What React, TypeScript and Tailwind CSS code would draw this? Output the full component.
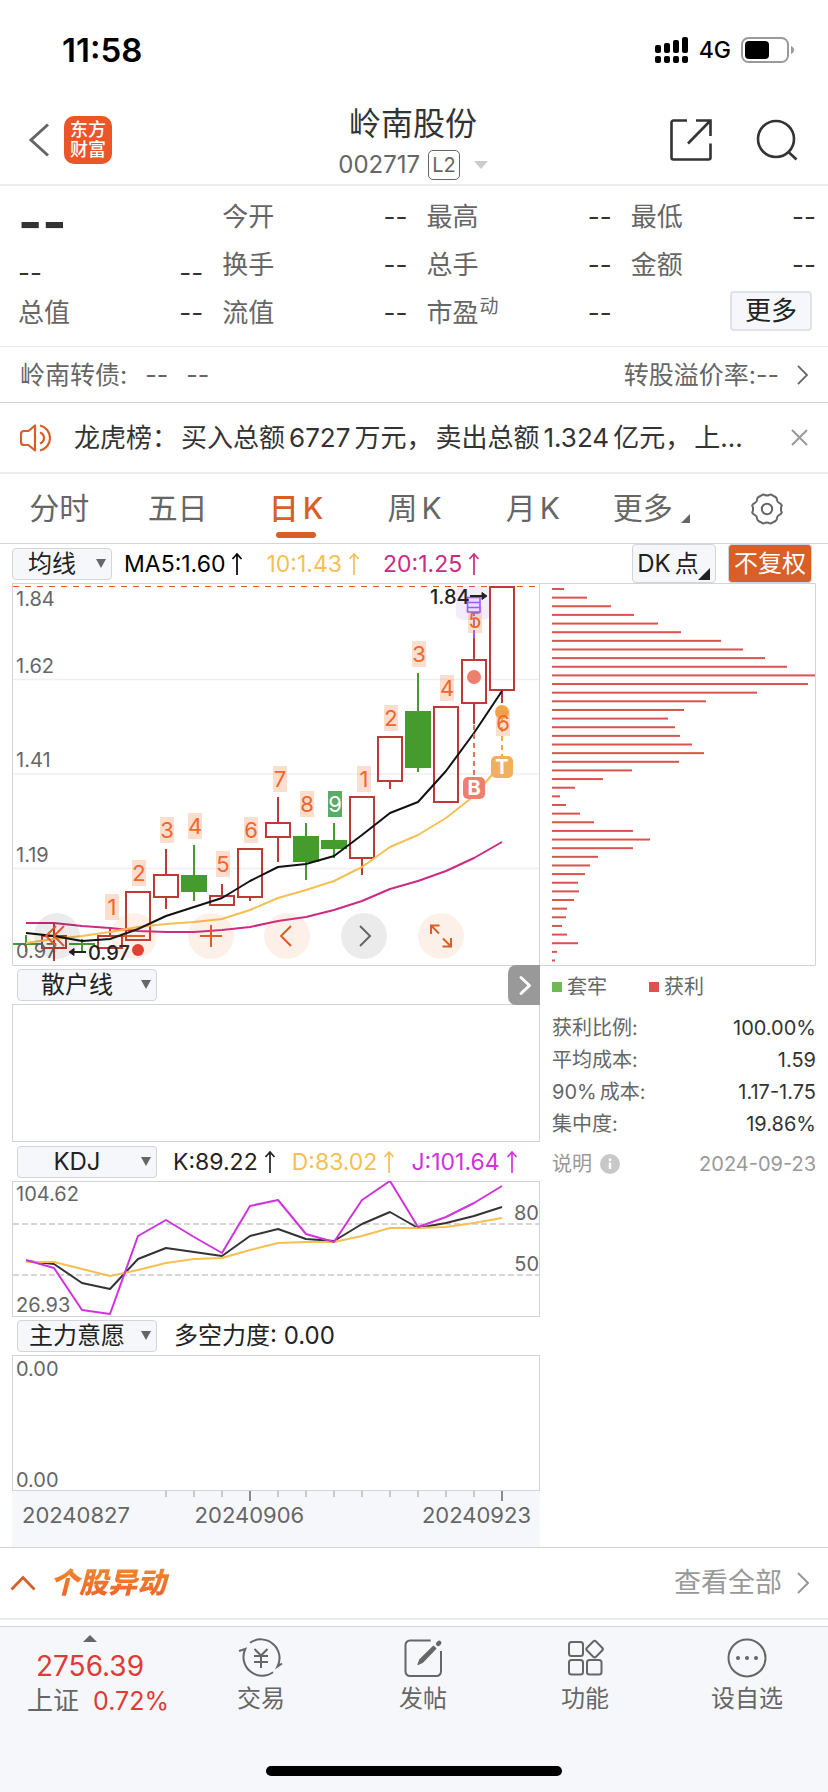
import React from "react";

const FONT = "font-['Inter','Noto_Sans_CJK_SC',sans-serif]";

const CANDLE_STEP = 28;
const FIRST_X = 26;
const xAt = (i: number) => FIRST_X + CANDLE_STEP * i;
const toPoints = (ys: number[]) => ys.map((y, i) => `${xAt(i)},${y}`).join(" ");

type Candle = { kind: "up" | "down" | "flat"; high: number; top: number; bottom: number; low: number };

const candles: Candle[] = [
  { kind: "flat", high: 935, top: 944, bottom: 944, low: 952 },
  { kind: "up", high: 923, top: 936, bottom: 948, low: 961 },
  { kind: "flat", high: 939, top: 944, bottom: 944, low: 952 },
  { kind: "up", high: 927, top: 936, bottom: 948, low: 948 },
  { kind: "up", high: 892, top: 892, bottom: 940, low: 940 },
  { kind: "up", high: 849, top: 875, bottom: 897, low: 909 },
  { kind: "down", high: 845, top: 875, bottom: 892, low: 901 },
  { kind: "up", high: 884, top: 896, bottom: 905, low: 905 },
  { kind: "up", high: 849, top: 849, bottom: 897, low: 901 },
  { kind: "up", high: 797, top: 823, bottom: 837, low: 862 },
  { kind: "down", high: 823, top: 836, bottom: 862, low: 880 },
  { kind: "down", high: 823, top: 840, bottom: 849, low: 858 },
  { kind: "up", high: 797, top: 797, bottom: 858, low: 875 },
  { kind: "up", high: 737, top: 737, bottom: 781, low: 789 },
  { kind: "down", high: 673, top: 711, bottom: 768, low: 772 },
  { kind: "up", high: 707, top: 707, bottom: 802, low: 802 },
  { kind: "up", high: 638, top: 660, bottom: 703, low: 724 },
  { kind: "up", high: 587, top: 587, bottom: 690, low: 703 },
];

const ma5 = [933, 936, 941, 939, 929, 916, 907, 898, 881, 867, 864, 856, 835, 813, 802, 771, 733, 691];
const ma10 = [943, 939, 936, 932, 927, 924, 922, 919, 910, 898, 890, 881, 867, 847, 835, 818, 796, 763];
const ma20 = [923, 923, 926, 928, 931, 932, 932, 930, 927, 921, 917, 910, 901, 889, 881, 871, 858, 842];

const tags: { x: number; y: number; n: number }[] = [
  { x: 112, y: 894, n: 1 },
  { x: 139, y: 860, n: 2 },
  { x: 167, y: 817, n: 3 },
  { x: 195, y: 813, n: 4 },
  { x: 223, y: 851, n: 5 },
  { x: 251, y: 817, n: 6 },
  { x: 280, y: 766, n: 7 },
  { x: 307, y: 791, n: 8 },
  { x: 335, y: 791, n: 9 },
  { x: 364, y: 766, n: 1 },
  { x: 391, y: 705, n: 2 },
  { x: 419, y: 641, n: 3 },
  { x: 447, y: 675, n: 4 },
  { x: 475, y: 607, n: 5 },
  { x: 503, y: 710, n: 6 },
];

const kLine = [1261, 1264, 1283, 1289, 1259, 1248, 1252, 1256, 1236, 1229, 1239, 1241, 1224, 1212, 1228, 1223, 1216, 1207];
const dLine = [1262, 1262, 1269, 1276, 1270, 1263, 1259, 1258, 1250, 1243, 1242, 1242, 1236, 1228, 1228, 1227, 1223, 1218];
const jLine = [1260, 1268, 1310, 1314, 1236, 1220, 1237, 1253, 1206, 1200, 1234, 1242, 1200, 1181, 1227, 1217, 1203, 1186];

const chips = [
  12, 35, 59, 82, 106, 129, 169, 191, 213, 235, 263, 256, 205, 154, 132, 116, 123, 128, 140, 152, 127, 80, 51, 23, 8, 14,
  28, 42, 81, 98, 81, 46, 38, 33, 26, 27, 22, 15, 14, 10, 15, 26, 5, 3,
];

function ChevronRight({ className }: { className: string }) {
  return (
    <svg viewBox="0 0 12 22" className={className} fill="none" stroke="currentColor" strokeWidth="2">
      <path d="M1 1l10 10L1 21" />
    </svg>
  );
}

function UpArrow() {
  return (
    <svg viewBox="0 0 12 24" className="ml-[6px] inline-block h-6 w-3 shrink-0" fill="none" stroke="currentColor" strokeWidth="1.7">
      <path d="M6 23V2M1.500 7 6 2l4.500 5" />
    </svg>
  );
}

function StatusBar() {
  return (
    <div className="flex h-[92px] items-center justify-between pt-2 pr-[34px] pl-[62px]">
      <span className="text-[33px] font-semibold leading-10 text-black">11:58</span>
      <div className="flex items-center gap-[10px]">
        <svg viewBox="0 0 34 26" className="h-[26px] w-[34px]" fill="#000">
          <rect x="0" y="8" width="6" height="8" rx="2" />
          <rect x="9" y="6" width="6" height="10" rx="2" />
          <rect x="18" y="3" width="6" height="13" rx="2" />
          <rect x="27" y="0" width="6" height="16" rx="2" />
          <rect x="0" y="19" width="6" height="7" rx="2" />
          <rect x="9" y="19" width="6" height="7" rx="2" />
          <rect x="18" y="19" width="6" height="7" rx="2" />
          <rect x="27" y="19" width="6" height="7" rx="2" />
        </svg>
        <span className="text-[23px] font-medium leading-8 text-black">4G</span>
        <svg viewBox="0 0 53 26" className="h-[26px] w-[53px]">
          <rect x="1" y="1" width="46" height="24" rx="6.500" fill="none" stroke="#9a9a9a" strokeWidth="2" />
          <rect x="4" y="4" width="24" height="18" rx="4" fill="#000" />
          <path d="M50 9c2 .8 3 2.300 3 4s-1 3.200-3 4z" fill="#9a9a9a" />
        </svg>
      </div>
    </div>
  );
}

function Header() {
  return (
    <header className="flex h-[94px] items-center justify-between border-b-2 border-[#ececec] pt-1 pr-[30px] pl-[28px]">
      <div className="flex w-[128px] items-center gap-[14px]">
        <button aria-label="返回" className="text-[#666]">
          <svg viewBox="0 0 22 34" className="h-[34px] w-[22px]" fill="none" stroke="currentColor" strokeWidth="3">
            <path d="M20 1.500 3 17l17 15.500" />
          </svg>
        </button>
        <a href="#home" className="flex size-12 flex-col items-center justify-center rounded-[10px] bg-[#ec5527] text-[18px] font-medium leading-[20px] text-white">
          <span>东方</span>
          <span>财富</span>
        </a>
      </div>
      <div className="flex flex-col items-center pt-[6px]">
        <h1 className="text-[32px] leading-[44px] text-[#333]">岭南股份</h1>
        <button className="flex items-center gap-2 leading-[38px] text-[24px] text-[#666]">
          002717
          <span className="rounded-[5px] border border-[#666] px-[3px] text-[20px] leading-7">L2</span>
          <svg viewBox="0 0 14 8" className="ml-[6px] h-2 w-[14px]" fill="#ccc">
            <path d="M0 0h14L7 8z" />
          </svg>
        </button>
      </div>
      <div className="flex w-[128px] items-center justify-between">
        <button aria-label="分享" className="text-[#333]">
          <svg viewBox="0 0 42 42" className="size-[42px]" fill="none" stroke="currentColor" strokeWidth="2.600">
            <path d="M17 1.500H3.500a2 2 0 0 0-2 2v35a2 2 0 0 0 2 2h35a2 2 0 0 0 2-2V24.500M26 1.500h14.500V17M40 2 18 24.500" />
          </svg>
        </button>
        <button aria-label="搜索" className="text-[#333]">
          <svg viewBox="0 0 42 42" className="size-[42px]" fill="none" stroke="currentColor" strokeWidth="2.600">
            <circle cx="20" cy="20" r="18" />
            <path d="m32.500 33 8 7.500" />
          </svg>
        </button>
      </div>
    </header>
  );
}

function Quote({ label, sup }: { label?: string; sup?: string }) {
  return (
    <div className="flex h-12 items-center justify-between text-[26px] leading-8 text-[#666]">
      {label ? (
        <span className="flex">
          {label}
          {sup && <span className="-mt-1 ml-px text-[19px] leading-7">{sup}</span>}
        </span>
      ) : (
        <span className="pt-4 text-[#333]">--</span>
      )}
      <span className={label ? "text-[#333]" : "pt-4 text-[#333]"}>--</span>
    </div>
  );
}

function Quotes() {
  return (
    <section className="grid grid-cols-4 gap-x-[19px] border-b border-[#e9e9e9] pt-[7px] pr-3 pb-[9px] pl-[18px]">
      <div className="flex h-12 items-center pt-3 text-[52px] font-bold leading-8 text-[#333]">--</div>
      <Quote label="今开" />
      <Quote label="最高" />
      <Quote label="最低" />
      <Quote />
      <Quote label="换手" />
      <Quote label="总手" />
      <Quote label="金额" />
      <Quote label="总值" />
      <Quote label="流值" />
      <Quote label="市盈" sup="动" />
      <div className="flex h-11 items-center justify-end pr-1">
        <button className="h-10 w-[82px] rounded-[4px] border-2 border-[#e1e2e7] bg-[#f6f7fa] text-[26px] leading-8 text-[#222]">更多</button>
      </div>
    </section>
  );
}

function BondRow() {
  return (
    <a href="#bond" className="flex h-14 items-center justify-between border-b border-[#d3d4d9] pr-5 pl-5 text-[25px] leading-8 text-[#666]">
      <span className="flex gap-[18px]">
        <span>岭南转债:</span>
        <span>--</span>
        <span>--</span>
      </span>
      <span className="flex items-center gap-[18px]">
        转股溢价率:--
        <ChevronRight className="h-5 w-[11px]" />
      </span>
    </a>
  );
}

function News() {
  return (
    <div className="flex h-[71px] items-center border-b-2 border-[#ececec] pr-5 pl-5">
      <svg viewBox="0 0 34 28" className="h-7 w-[34px] shrink-0" fill="none" stroke="#d85f28" strokeWidth="2.200">
        <path d="M15 1.500v25L8.500 21H4a3 3 0 0 1-3-3v-8a3 3 0 0 1 3-3h4.500z" strokeLinejoin="round" />
        <path d="M20 8.500a5.800 5.800 0 0 1 0 11M20 1.500a12.800 12.800 0 0 1 0 25" />
      </svg>
      <p className="ml-5 min-w-0 flex-1 whitespace-nowrap text-[26px] leading-9 text-[#333]">
        龙虎榜：<span className="ml-[3px]">买入总额</span>
        <span className="mx-1">6727</span>
        <span>万元，</span>
        <span className="ml-[3px]">卖出总额</span>
        <span className="mx-1">1.324</span>
        <span>亿元，</span>
        <span className="ml-[3px]">上...</span>
      </p>
      <button aria-label="关闭" className="text-[#999]">
        <svg viewBox="0 0 17 17" className="size-[17px]" fill="none" stroke="currentColor" strokeWidth="2">
          <path d="M1 1l15 15M16 1 1 16" />
        </svg>
      </button>
    </div>
  );
}

function Tabs() {
  const tabs = [["分时"], ["五日"], ["日", "K"], ["周", "K"], ["月", "K"]];
  return (
    <nav className="flex h-[70px] border-b border-[#d3d4d9]">
      {tabs.map((parts) => {
        const active = parts[0] === "日";
        return (
          <button
            key={parts[0]}
            className={
              active
                ? "relative flex flex-[119] items-center justify-center gap-1 text-[30px] font-medium text-[#d85f28]"
                : "relative flex flex-[119] items-center justify-center gap-1 text-[30px] text-[#666]"
            }
          >
            {parts.map((p) => (
              <span key={p}>{p}</span>
            ))}
            {active && <span className="absolute bottom-[5px] left-1/2 h-[6px] w-10 -translate-x-1/2 rounded-full bg-[#d85f28]" />}
          </button>
        );
      })}
      <button className="flex flex-[119] items-center justify-center gap-2 text-[30px] text-[#666]">
        更多
        <svg viewBox="0 0 9 9" className="mt-5 size-[9px]" fill="currentColor">
          <path d="M9 0v9H0z" />
        </svg>
      </button>
      <button aria-label="设置" className="flex flex-[114] items-center justify-center pr-1 text-[#666]">
        <svg viewBox="0 0 34 32" className="h-8 w-[34px]" fill="none" stroke="currentColor" strokeWidth="2" strokeLinejoin="round">
          <path d="M12 2.200 Q13.200 1 15 2 Q17 3 19 2 Q20.800 1 22 2.200 L25.500 4 Q27 4.800 27 7 Q27.200 9 29 9.800 Q31.500 11 31.800 12.500 Q30 16 31.800 19.500 Q31.500 21 29 22.200 Q27.200 23 27 25 Q27 27.200 25.500 28 L22 29.800 Q20.800 31 19 30 Q17 29 15 30 Q13.200 31 12 29.800 L8.500 28 Q7 27.200 7 25 Q6.800 23 5 22.200 Q2.500 21 2.200 19.500 Q4 16 2.200 12.500 Q2.500 11 5 9.800 Q6.800 9 7 7 Q7 4.800 8.500 4 Z" />
          <circle cx="17" cy="16" r="5.200" />
        </svg>
      </button>
    </nav>
  );
}

function Picker({ label, name, wide }: { label: string; name: string; wide?: boolean }) {
  return (
    <label className={wide ? "relative flex h-8 w-[140px]" : "relative flex h-8 w-[100px]"}>
      <select
        aria-label={name}
        className="w-full appearance-none rounded-[4px] border border-[#d3d4dc] bg-[#f6f7fa] pr-5 text-center text-[24px] leading-[30px] text-[#222] [text-align-last:center]"
      >
        <option>{label}</option>
      </select>
      <svg viewBox="0 0 10 9" className="pointer-events-none absolute top-[11px] right-[6px] h-[9px] w-[10px]" fill="#666">
        <path d="M0 0h10L5 9z" />
      </svg>
    </label>
  );
}

function Legend({ text, className }: { text: string; className: string }) {
  return (
    <span className={className}>
      {text}
      <UpArrow />
    </span>
  );
}

function ChartToolbar() {
  return (
    <div className="flex h-[39px] items-center pr-4 pl-3">
      <Picker label="均线" name="指标" />
      <div className="ml-3 flex gap-[23px] text-[23px] leading-8">
        <Legend text="MA5:1.60" className="flex items-center text-black" />
        <Legend text="10:1.43" className="flex items-center text-[#f5bf54]" />
        <Legend text="20:1.25" className="flex items-center text-[#cb2b83]" />
      </div>
      <button className="relative ml-auto flex h-[39px] w-[84px] items-center justify-center gap-1 rounded-[4px] border border-[#d3d4dc] bg-[#f6f7fa] pr-3 text-[24px] text-[#222]">
        <span>DK</span>
        <span>点</span>
        <svg viewBox="0 0 12 12" className="absolute right-[5px] bottom-[2px] size-3" fill="#222">
          <path d="M12 0v12H0z" />
        </svg>
      </button>
      <button className="ml-3 h-[39px] w-[84px] rounded-[4px] border border-[#d3d4dc] bg-[#d85f28] text-[24px] text-white">不复权</button>
    </div>
  );
}

function CandleShape({ c, i }: { c: Candle; i: number }) {
  const x = xAt(i);
  if (c.kind === "up") {
    return (
      <g fill="#fff" stroke="#bf3a36" strokeWidth="2">
        <path d={`M${x} ${c.high}V${c.top}M${x} ${c.bottom}V${c.low}`} />
        <rect x={x - 12} y={c.top} width="24" height={c.bottom - c.top} fillOpacity="0" />
        {i === 1 && <path d={`M${x} ${c.top}V${c.bottom}`} />}
      </g>
    );
  }
  return (
    <g fill="#459b2b" stroke="#459b2b" strokeWidth="2">
      <path d={`M${x} ${c.high}V${c.low}`} />
      {c.kind === "flat" ? <path d={`M${x - 13} ${c.top}H${x + 13}`} /> : <rect x={x - 12} y={c.top + 1} width="24" height={c.bottom - c.top - 2} />}
    </g>
  );
}

function CandleChart() {
  return (
    <svg viewBox="12 583 528 383" className="block h-auto w-full" role="img" aria-label="日K线">
      <path d="M12.500 583V965.500H539.500V583.500H12" fill="none" stroke="#d3d4d9" />
      <path d="M13 679.500H539M13 774H539M13 868.500H539" stroke="#eeeff5" strokeWidth="1.500" />
      <path d="M13 586.500H536" stroke="#d85f28" strokeWidth="1.200" strokeDasharray="6 6" />
      {candles.map((c, i) => (
        <CandleShape key={i} c={c} i={i} />
      ))}
      <g fill="none" strokeWidth="2" strokeLinejoin="round">
        <polyline points={toPoints(ma20)} stroke="#cb2b83" />
        <polyline points={toPoints(ma10)} stroke="#f5bf54" />
        <polyline points={toPoints(ma5)} stroke="#111" />
      </g>
      <rect x="456" y="586" width="34" height="34" rx="7" fill="#9a60f0" fillOpacity="0.120" />
      <path d="M474 608V640" stroke="#9a5cf5" strokeWidth="2" strokeDasharray="8 3" />
      <path d="M474 725V777" stroke="#e9705f" strokeWidth="2" strokeDasharray="5 4" />
      <path d="M502 718V756" stroke="#f0a848" strokeWidth="2" strokeDasharray="5 4" />
      <circle cx="474" cy="677" r="7" fill="#ee7f6f" />
      <circle cx="502" cy="712" r="7" fill="#f0a848" />
      {tags.map((t) => (
        <g key={`${t.x}-${t.n}`}>
          <rect x={t.x - 7} y={t.y} width="14" height="26" fill={t.n === 9 ? "#5aab68" : "#f08a50"} fillOpacity={t.n === 9 ? 1 : 0.28} />
          <text x={t.x} y={t.y + 21} textAnchor="middle" fontSize="22" fill={t.n === 9 ? "#fff" : "#f0672b"}>
            {t.n}
          </text>
        </g>
      ))}
      <path d="M467.500 597.500h12.500v14.500h-12.500zM467.500 602.500h12.500M467.500 607.500h12.500" fill="#e9dcfc" stroke="#9a5cf5" strokeWidth="1.600" />
      <rect x="463" y="777" width="22" height="22" rx="5" fill="#ee7f6f" />
      <rect x="491" y="756" width="22" height="22" rx="5" fill="#f3b05c" />
      <g fill="#fff" fontSize="20" fontWeight="700" textAnchor="middle">
        <text x="474" y="795">B</text>
        <text x="502" y="774">T</text>
      </g>
      <g fontSize="20" fill="#666">
        <text x="16" y="606">1.84</text>
        <text x="16" y="673">1.62</text>
        <text x="16" y="767">1.41</text>
        <text x="16" y="862">1.19</text>
        <text x="16" y="958">0.97</text>
      </g>
      <g fontSize="20" fill="#222" fontWeight="500">
        <text x="430" y="604">1.84</text>
        <text x="88" y="960">0.97</text>
      </g>
      <g stroke="#222" strokeWidth="2" fill="#222">
        <path d="M470 596H483" />
        <path d="M482 592.500 487 596l-5 3.500z" strokeWidth="1" />
        <path d="M73 952H86" />
        <path d="M74 948.500 69 952l5 3.500z" strokeWidth="1" />
      </g>
      <circle cx="138" cy="950" r="6" fill="#e03d32" />
    </svg>
  );
}

const controls: { label: string; path: string; gray?: boolean; icon: string }[] = [
  { label: "最左", gray: true, icon: "text-[#d85f28]", path: "M22 13 12 23l10 10M30 13 20 23l10 10" },
  { label: "缩小", icon: "text-[#d85f28]", path: "M12 23h22" },
  { label: "放大", icon: "text-[#d85f28]", path: "M12 23h22M23 12v22" },
  { label: "左移", icon: "text-[#d85f28]", path: "M27 13 17 23l10 10" },
  { label: "右移", gray: true, icon: "text-[#666]", path: "M19 13l10 10-10 10" },
  { label: "全屏", icon: "text-[#d85f28]", path: "M13 21v-8.500h8.500M13 12.500l8 8M33 25v8.500h-8.500M33 33.500l-8-8" },
];

function ChartControls() {
  return (
    <div className="absolute bottom-[7px] left-[22px] flex w-[430px] justify-between">
      {controls.map((c) => (
        <button
          key={c.label}
          aria-label={c.label}
          className={c.gray ? "size-[46px] rounded-full bg-black/8 " + c.icon : "size-[46px] rounded-full bg-[#e86a2a]/10 " + c.icon}
        >
          <svg viewBox="0 0 46 46" className="size-[46px]" fill="none" stroke="currentColor" strokeWidth="2">
            <path d={c.path} />
          </svg>
        </button>
      ))}
    </div>
  );
}

function KdjChart() {
  return (
    <svg viewBox="12 1181 528 136" className="block h-auto w-full" role="img" aria-label="KDJ">
      <rect x="12.500" y="1181.500" width="527" height="135" fill="none" stroke="#d3d4d9" />
      <path d="M13 1224H539M13 1275H539" stroke="#d6d6d6" strokeWidth="2" strokeDasharray="6 3" />
      <g fill="none" strokeWidth="2" strokeLinejoin="round">
        <polyline points={toPoints(kLine)} stroke="#333" />
        <polyline points={toPoints(dLine)} stroke="#f5bf54" />
        <polyline points={toPoints(jLine)} stroke="#d033dc" />
      </g>
      <g fontSize="20" fill="#666">
        <text x="16" y="1201">104.62</text>
        <text x="16" y="1312">26.93</text>
        <text x="539" y="1220" textAnchor="end">80</text>
        <text x="539" y="1271" textAnchor="end">50</text>
      </g>
    </svg>
  );
}

function DateAxis() {
  const ticks = Array.from({ length: 13 }, (_, k) => k + 5);
  return (
    <div className="bg-[#f6f7fa]">
      <svg viewBox="12 1491 528 12" className="block h-auto w-full" strokeWidth="2">
        {ticks.map((i) => (
          <path key={i} d={`M${xAt(i)} 1491v${i === 8 || i === 17 ? 10 : 6}`} stroke={i === 8 || i === 17 ? "#8a8a8a" : "#c8c8c8"} />
        ))}
      </svg>
      <div className="flex h-11 justify-between pr-[9px] pl-[10px] text-[22px] leading-6 text-[#666]">
        <span>20240827</span>
        <span className="mr-[53px]">20240906</span>
        <span>20240923</span>
      </div>
    </div>
  );
}

function ChipStat({ label, prefix, value }: { label: string; prefix?: string; value: string }) {
  return (
    <div className="flex h-8 items-center justify-between">
      <dt className="flex gap-[3px] text-[#666]">
        {prefix && <span>{prefix}</span>}
        <span>{label}</span>
      </dt>
      <dd className="text-[#333]">{value}</dd>
    </div>
  );
}

function ChipPanel() {
  return (
    <aside className="min-w-0 flex-[276]">
      <svg viewBox="540 583 276 383" className="block h-auto w-full" role="img" aria-label="筹码分布">
        <path d="M540 583.500H815.500V965.500H540" fill="none" stroke="#d3d4d9" />
        {chips.map((w, i) => (
          <rect key={i} x="552" y={588 + (i * 371.500) / 43} width={w} height="2" fill="#d9534f" />
        ))}
      </svg>
      <div className="pl-3 text-[20px] leading-7">
        <div className="flex h-[42px] items-center text-[#666]">
          <span className="size-[10px] bg-[#70b854]" />
          <span className="ml-[5px] w-[82px]">套牢</span>
          <span className="size-[10px] bg-[#d9534f]" />
          <span className="ml-[5px]">获利</span>
        </div>
        <dl className="pt-1">
          <ChipStat label="获利比例:" value="100.00%" />
          <ChipStat label="平均成本:" value="1.59" />
          <ChipStat prefix="90%" label="成本:" value="1.17-1.75" />
          <ChipStat label="集中度:" value="19.86%" />
        </dl>
        <div className="flex h-12 items-center text-[#999]">
          说明
          <svg viewBox="0 0 20 20" className="ml-2 size-5">
            <circle cx="10" cy="10" r="10" fill="#c8c8c8" />
            <path d="M10 8.500v6.500M10 4.500v2.500" stroke="#fff" strokeWidth="2.400" />
          </svg>
          <span className="ml-auto">2024-09-23</span>
        </div>
      </div>
    </aside>
  );
}

function Charts() {
  return (
    <section className="flex px-3">
      <div className="min-w-0 flex-[528]">
        <div className="relative">
          <CandleChart />
          <ChartControls />
        </div>
        <div className="flex h-[38px] items-center justify-between pl-[5px]">
          <Picker label="散户线" name="副图一" wide />
          <button aria-label="收起" className="relative -mt-px h-10 w-8 rounded-l-[8px] bg-[#999] text-white">
            <svg viewBox="0 0 32 40" className="h-10 w-8" fill="none" stroke="currentColor" strokeWidth="3" strokeLinecap="round" strokeLinejoin="round">
              <path d="M13 12.500l8.500 8-8.500 8" />
            </svg>
          </button>
        </div>
        <div className="h-[138px] border border-[#d3d4d9]" />
        <div className="flex h-[39px] items-center pl-[5px]">
          <Picker label="KDJ" name="副图二" wide />
          <div className="ml-4 flex gap-4 text-[23px] leading-8">
            <Legend text="K:89.22" className="flex items-center text-[#222]" />
            <Legend text="D:83.02" className="flex items-center text-[#f5bf54]" />
            <Legend text="J:101.64" className="flex items-center text-[#d033dc]" />
          </div>
        </div>
        <KdjChart />
        <div className="flex h-[38px] items-center gap-[17px] pl-[5px] text-[24px] leading-8 text-[#222]">
          <Picker label="主力意愿" name="副图三" wide />
          <span>多空力度: 0.00</span>
        </div>
        <div className="flex h-[136px] flex-col justify-between border border-[#d3d4d9] px-[3px] text-[20px] leading-[26px] text-[#666]">
          <span>0.00</span>
          <span className="-mb-[3px]">0.00</span>
        </div>
        <DateAxis />
      </div>
      <ChipPanel />
    </section>
  );
}

function Movers() {
  return (
    <section className="flex h-[73px] items-center border-t border-b-2 border-t-[#d3d4d9] border-b-[#ececec] pr-[19px] pl-[10px]">
      <svg viewBox="0 0 26 16" className="h-4 w-[26px]" fill="none" stroke="#d85f28" strokeWidth="2.800">
        <path d="M1.500 14.500 13 2.500l11.500 12" />
      </svg>
      <h2 className="ml-[14px] bg-gradient-to-b from-[#f08c30] to-[#ee5c28] bg-clip-text pr-1 text-[29px] font-black italic leading-10 text-transparent">个股异动</h2>
      <a href="#all" className="ml-auto flex items-center gap-[15px] text-[27px] leading-9 text-[#999]">
        查看全部
        <ChevronRight className="h-[22px] w-3" />
      </a>
    </section>
  );
}

const navItems: { label: string; icon: React.ReactNode }[] = [
  {
    label: "交易",
    icon: (
      <>
        <path d="M10 5.800A18.700 18.700 0 0 1 37.500 29.500L42 26.500M33 35.300A18.700 18.700 0 0 1 5.300 12L-1 14" />
        <path d="m14.500 12 6.500 6.500 6.500-6.500M14 19h14M14 25h14M21 18.500v12.500" />
      </>
    ),
  },
  {
    label: "发帖",
    icon: (
      <>
        <path d="M28.700 3.500H8a4.500 4.500 0 0 0-4.500 4.500v26.500A4.500 4.500 0 0 0 8 39h26.500a4.500 4.500 0 0 0 4.500-4.500V14" />
        <path d="M16 27.500l1.800-4.800L31.500 9.200l2.300 2.300L20.300 25.500z" fill="currentColor" strokeWidth="1.200" strokeLinejoin="round" />
        <path d="M36.200 6.800l1-1" strokeWidth="4.500" strokeLinecap="round" />
      </>
    ),
  },
  {
    label: "功能",
    icon: (
      <>
        <rect x="5" y="5" width="14" height="14" rx="2.500" />
        <rect x="5" y="23" width="14" height="14.500" rx="2.500" />
        <rect x="23" y="23" width="14.500" height="14.500" rx="2.500" />
        <path d="M29.200 4.500 23 10.700a2 2 0 0 0 0 2.800l6.200 6.200a2 2 0 0 0 2.800 0l6.200-6.200a2 2 0 0 0 0-2.800l-6.200-6.200a2 2 0 0 0-2.800 0z" />
      </>
    ),
  },
  {
    label: "设自选",
    icon: (
      <>
        <circle cx="21" cy="21" r="18.500" />
        <path d="M12 21h.01M21 21h.01M30 21h.01" strokeWidth="4" strokeLinecap="round" />
      </>
    ),
  },
];

function BottomBar() {
  return (
    <footer className="mt-[6px] flex h-[166px] flex-col border-t border-[#d3d4d9] bg-[#f6f7fa] text-[#666]">
      <div className="flex h-[92px]">
        <a href="#index" className="flex flex-[180] flex-col items-center pt-2">
          <svg viewBox="0 0 14 7" className="h-[7px] w-[14px]" fill="#666">
            <path d="M7 0l7 7H0z" />
          </svg>
          <span className="mt-[7px] text-[28px] leading-[34px] text-[#e03a36]">2756.39</span>
          <span className="flex gap-[14px] pl-4 text-[26px] leading-9">
            上证 <span className="text-[25px] text-[#e03a36]">0.72%</span>
          </span>
        </a>
        {navItems.map((n) => (
          <a key={n.label} href={`#${n.label}`} className="flex flex-[162] flex-col items-center pt-[10px] text-[24px] leading-8">
            <svg viewBox="0 0 42 42" className="size-[42px] overflow-visible" fill="none" stroke="currentColor" strokeWidth="2">
              {n.icon}
            </svg>
            <span className="mt-1">{n.label}</span>
          </a>
        ))}
      </div>
      <div className="mx-auto mt-auto mb-4 h-[10px] w-[296px] rounded-full bg-black" />
    </footer>
  );
}

export default function App() {
  return (
    <div className={`min-h-screen overflow-x-hidden bg-white ${FONT}`}>
      <StatusBar />
      <Header />
      <main>
        <Quotes />
        <BondRow />
        <News />
        <Tabs />
        <ChartToolbar />
        <Charts />
        <Movers />
      </main>
      <BottomBar />
    </div>
  );
}
